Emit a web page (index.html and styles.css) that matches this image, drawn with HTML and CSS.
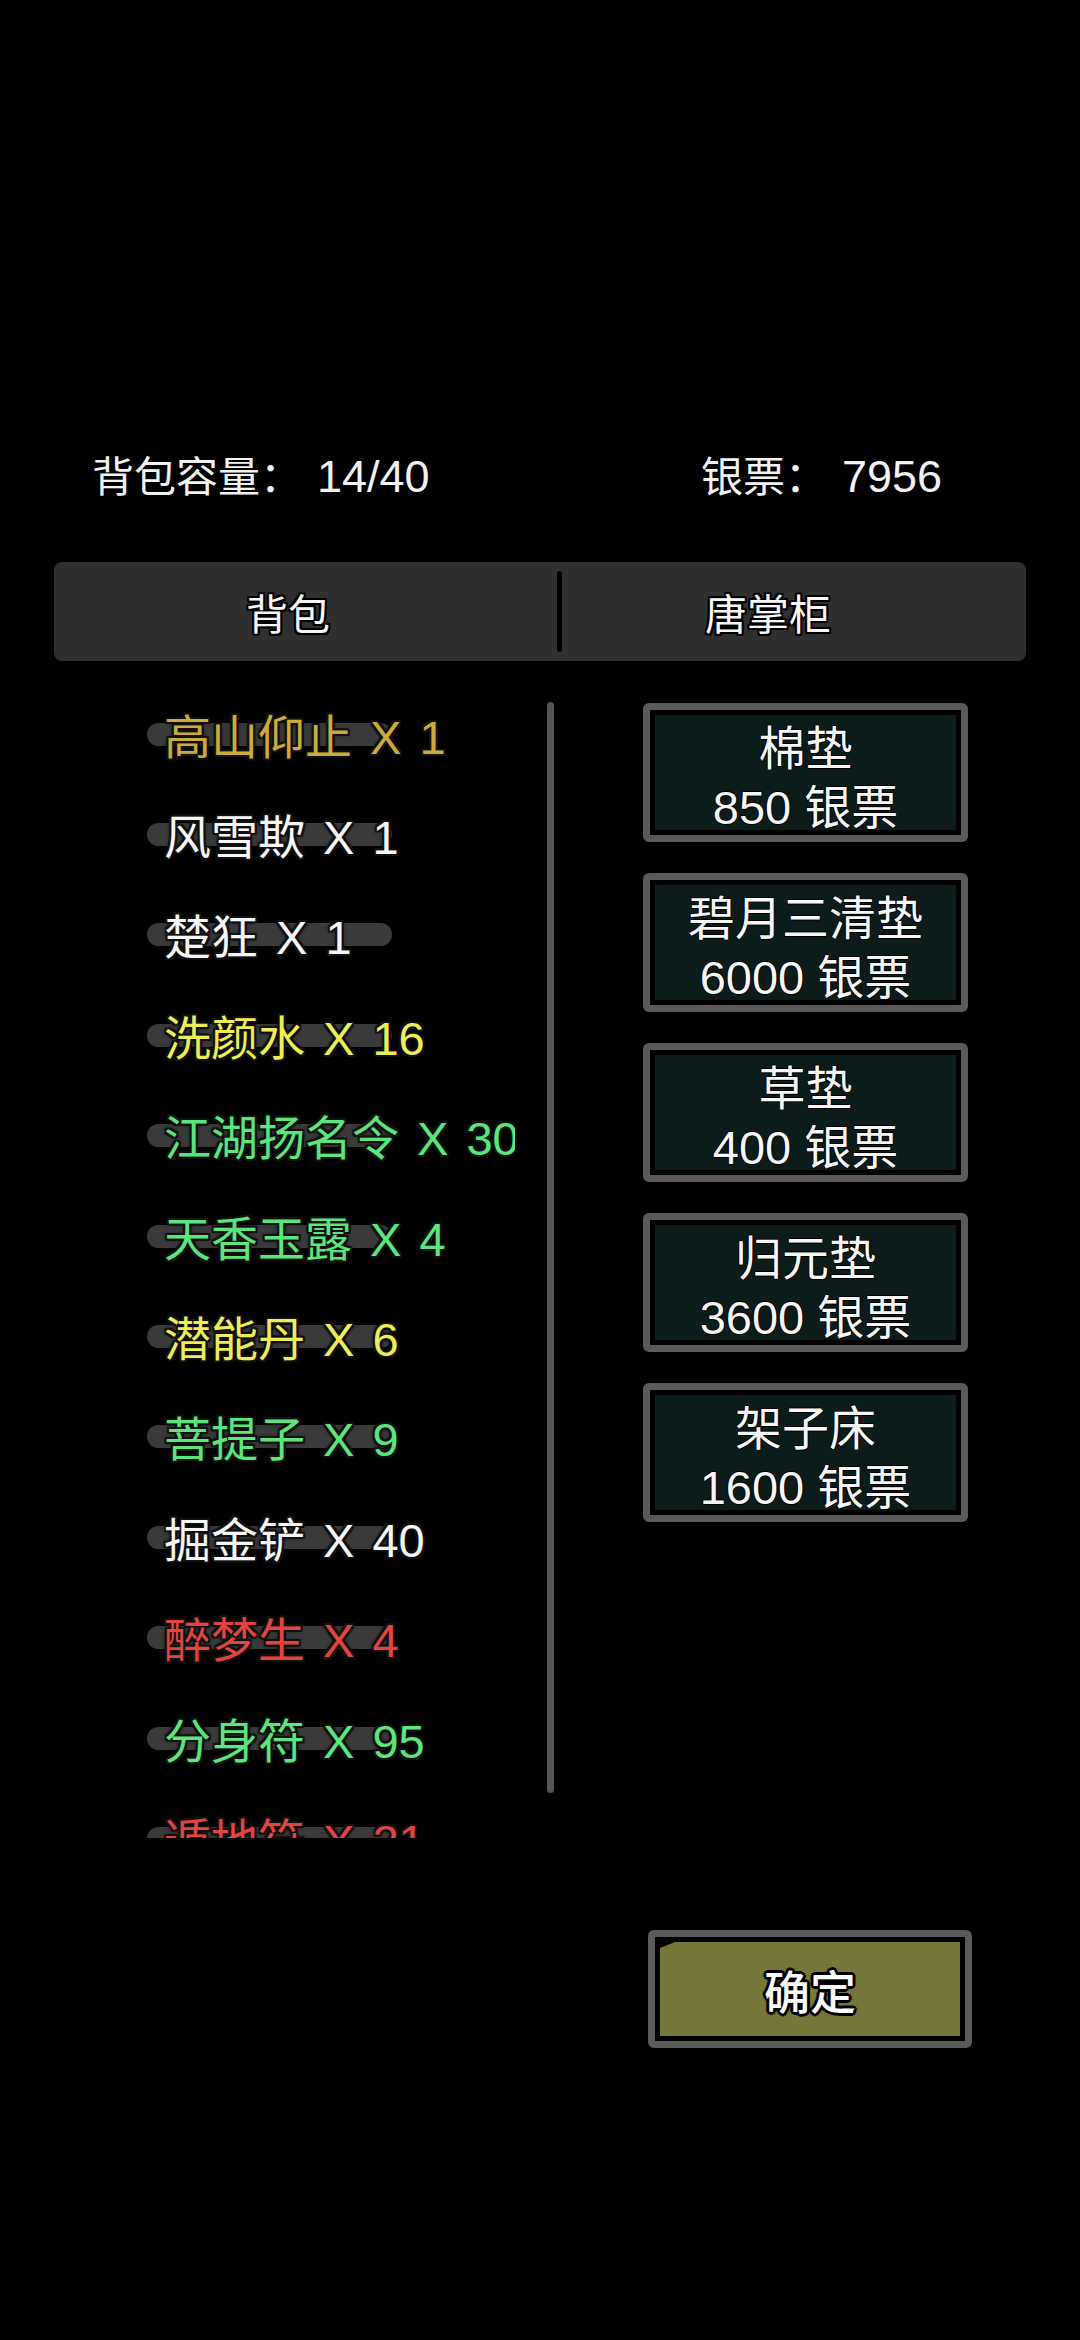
FILE: index.html
```html
<!DOCTYPE html>
<html lang="zh-CN">
<head>
<meta charset="utf-8">
<title>背包</title>
<link rel="stylesheet" href="styles.css">
</head>
<body>
<div class="screen">
  <div class="stats">
    <div class="stat"><span class="stat-label">背包容量：</span><span class="stat-value">14/40</span></div>
    <div class="stat"><span class="stat-label">银票：</span><span class="stat-value">7956</span></div>
  </div>

  <div class="tabs">
    <div class="tab tab-bag">背包</div>
    <div class="tab-divider"></div>
    <div class="tab tab-shop">唐掌柜</div>
  </div>

  <div class="content">
    <div class="bag-list">
      <div class="item"><div class="pill"></div><div class="item-text c-gold">高山仰止 X 1</div></div>
      <div class="item"><div class="pill"></div><div class="item-text c-white">风雪欺 X 1</div></div>
      <div class="item"><div class="pill"></div><div class="item-text c-white">楚狂 X 1</div></div>
      <div class="item"><div class="pill"></div><div class="item-text c-yellow">洗颜水 X 16</div></div>
      <div class="item"><div class="pill"></div><div class="item-text c-green">江湖扬名令 X 30</div></div>
      <div class="item"><div class="pill"></div><div class="item-text c-green">天香玉露 X 4</div></div>
      <div class="item"><div class="pill"></div><div class="item-text c-yellow">潜能丹 X 6</div></div>
      <div class="item"><div class="pill"></div><div class="item-text c-green">菩提子 X 9</div></div>
      <div class="item"><div class="pill"></div><div class="item-text c-white">掘金铲 X 40</div></div>
      <div class="item"><div class="pill"></div><div class="item-text c-red">醉梦生 X 4</div></div>
      <div class="item"><div class="pill"></div><div class="item-text c-green">分身符 X 95</div></div>
      <div class="item"><div class="pill"></div><div class="item-text c-red">遁地符 X 21</div></div>
    </div>
    <div class="scrollbar"></div>
    <div class="shop">
      <div class="shop-btn"><div class="shop-name">棉垫</div><div class="shop-price">850 银票</div></div>
      <div class="shop-btn"><div class="shop-name">碧月三清垫</div><div class="shop-price">6000 银票</div></div>
      <div class="shop-btn"><div class="shop-name">草垫</div><div class="shop-price">400 银票</div></div>
      <div class="shop-btn"><div class="shop-name">归元垫</div><div class="shop-price">3600 银票</div></div>
      <div class="shop-btn"><div class="shop-name">架子床</div><div class="shop-price">1600 银票</div></div>
    </div>
  </div>

  <div class="footer">
    <div class="confirm"><div class="confirm-fill"><span class="confirm-text">确定</span></div></div>
  </div>
</div>
</body>
</html>
```

FILE: styles.css
```css
html, body {
  margin: 0;
  padding: 0;
  background: #000;
}

body {
  width: 1080px;
  height: 2340px;
  overflow: hidden;
  font-family: "Liberation Sans", "Noto Sans CJK SC", sans-serif;
  color: #f4f4f4;
}

.screen {
  width: 1080px;
  height: 2340px;
}

/* ---------- stats ---------- */
.stats {
  display: grid;
  grid-template-columns: 609px 1fr;
  padding: 447px 0 0 92px;
  height: 60px;
  font-size: 42px;
  line-height: 60px;
  color: #f2f2f2;
}

.stat {
  display: flex;
  align-items: baseline;
  white-space: nowrap;
}

.stat-value {
  margin-left: 15px;
  font-size: 45px;
}

/* ---------- tabs ---------- */
.tabs {
  display: flex;
  align-items: center;
  margin: 55px 54px 0 54px;
  height: 99px;
  background: #2f2f2f;
  border-radius: 8px;
}

.tab {
  display: flex;
  justify-content: center;
  align-items: center;
  height: 100%;
  font-size: 42px;
  color: #f6f6f6;
  text-shadow: 2px 0 #000, -2px 0 #000, 0 2px #000, 0 -2px #000,
               2px 2px #000, -2px -2px #000, 2px -2px #000, -2px 2px #000;
}

.tab-bag {
  width: 503px;
  padding-right: 35px;
  box-sizing: border-box;
}

.tab-shop {
  flex: 1;
  padding-right: 52px;
  box-sizing: border-box;
}

.tab-divider {
  width: 5px;
  height: 81px;
  border-radius: 3px;
  background: #000;
}

/* ---------- content ---------- */
.content {
  display: flex;
  align-items: flex-start;
  margin-top: 26px;
  padding-left: 147px;
}

.bag-list {
  width: 368px;
  height: 1151px;
  overflow: hidden;
  flex-shrink: 0;
}

.item {
  display: grid;
  height: 100.4px;
  align-items: center;
}

.item > * {
  grid-area: 1 / 1;
}

.pill {
  width: 245px;
  height: 23px;
  margin-bottom: 6px;
  border-radius: 12px;
  background: #3a3a3a;
}

.item-text {
  padding-left: 17px;
  font-size: 47px;
  line-height: 1;
  white-space: nowrap;
  word-spacing: 5px;
  text-shadow: 2px 0 #101010, -2px 0 #101010, 0 2px #101010, 0 -2px #101010,
               2px 2px #101010, -2px -2px #101010, 2px -2px #101010, -2px 2px #101010,
               0 0 5px #000;
}

.c-gold { color: #cbab3a; }
.c-white { color: #f6f6f6; }
.c-yellow { color: #eded58; }
.c-green { color: #5ce57c; }
.c-red { color: #e2453f; }

.scrollbar {
  flex-shrink: 0;
  margin-left: 32px;
  margin-top: 15px;
  width: 7px;
  height: 1091px;
  border-radius: 4px;
  background: #555;
}

.shop {
  display: flex;
  flex-direction: column;
  gap: 31px;
  margin-left: 89px;
  padding-top: 16px;
}

.shop-btn {
  box-sizing: border-box;
  width: 325px;
  height: 139px;
  border: 7px solid #5a5a5a;
  border-radius: 6px;
  background: #0c1c1b;
  box-shadow: inset 0 0 0 5px #000;
  padding-top: 9px;
  text-align: center;
  font-size: 47px;
  line-height: 59px;
  color: #f6f6f6;
  white-space: nowrap;
  text-shadow: 1px 0 #000, -1px 0 #000, 0 1px #000, 0 -1px #000;
}

/* ---------- footer ---------- */
.footer {
  margin-top: 92px;
  padding-left: 648px;
}

.confirm {
  box-sizing: border-box;
  width: 324px;
  height: 118px;
  border: 7px solid #5a5a5a;
  border-radius: 6px;
  background: #000;
  padding: 5px;
}

.confirm-fill {
  display: flex;
  justify-content: center;
  align-items: center;
  height: 100%;
  background: #74763a;
  clip-path: polygon(15px 0, 100% 0, 100% 100%, 0 100%, 0 6px);
}

.confirm-text {
  font-size: 46px;
  font-weight: 500;
  color: #fafafa;
  text-shadow: 3px 0 #000, -3px 0 #000, 0 3px #000, 0 -3px #000,
               2px 2px #000, -2px -2px #000, 2px -2px #000, -2px 2px #000;
}
```
